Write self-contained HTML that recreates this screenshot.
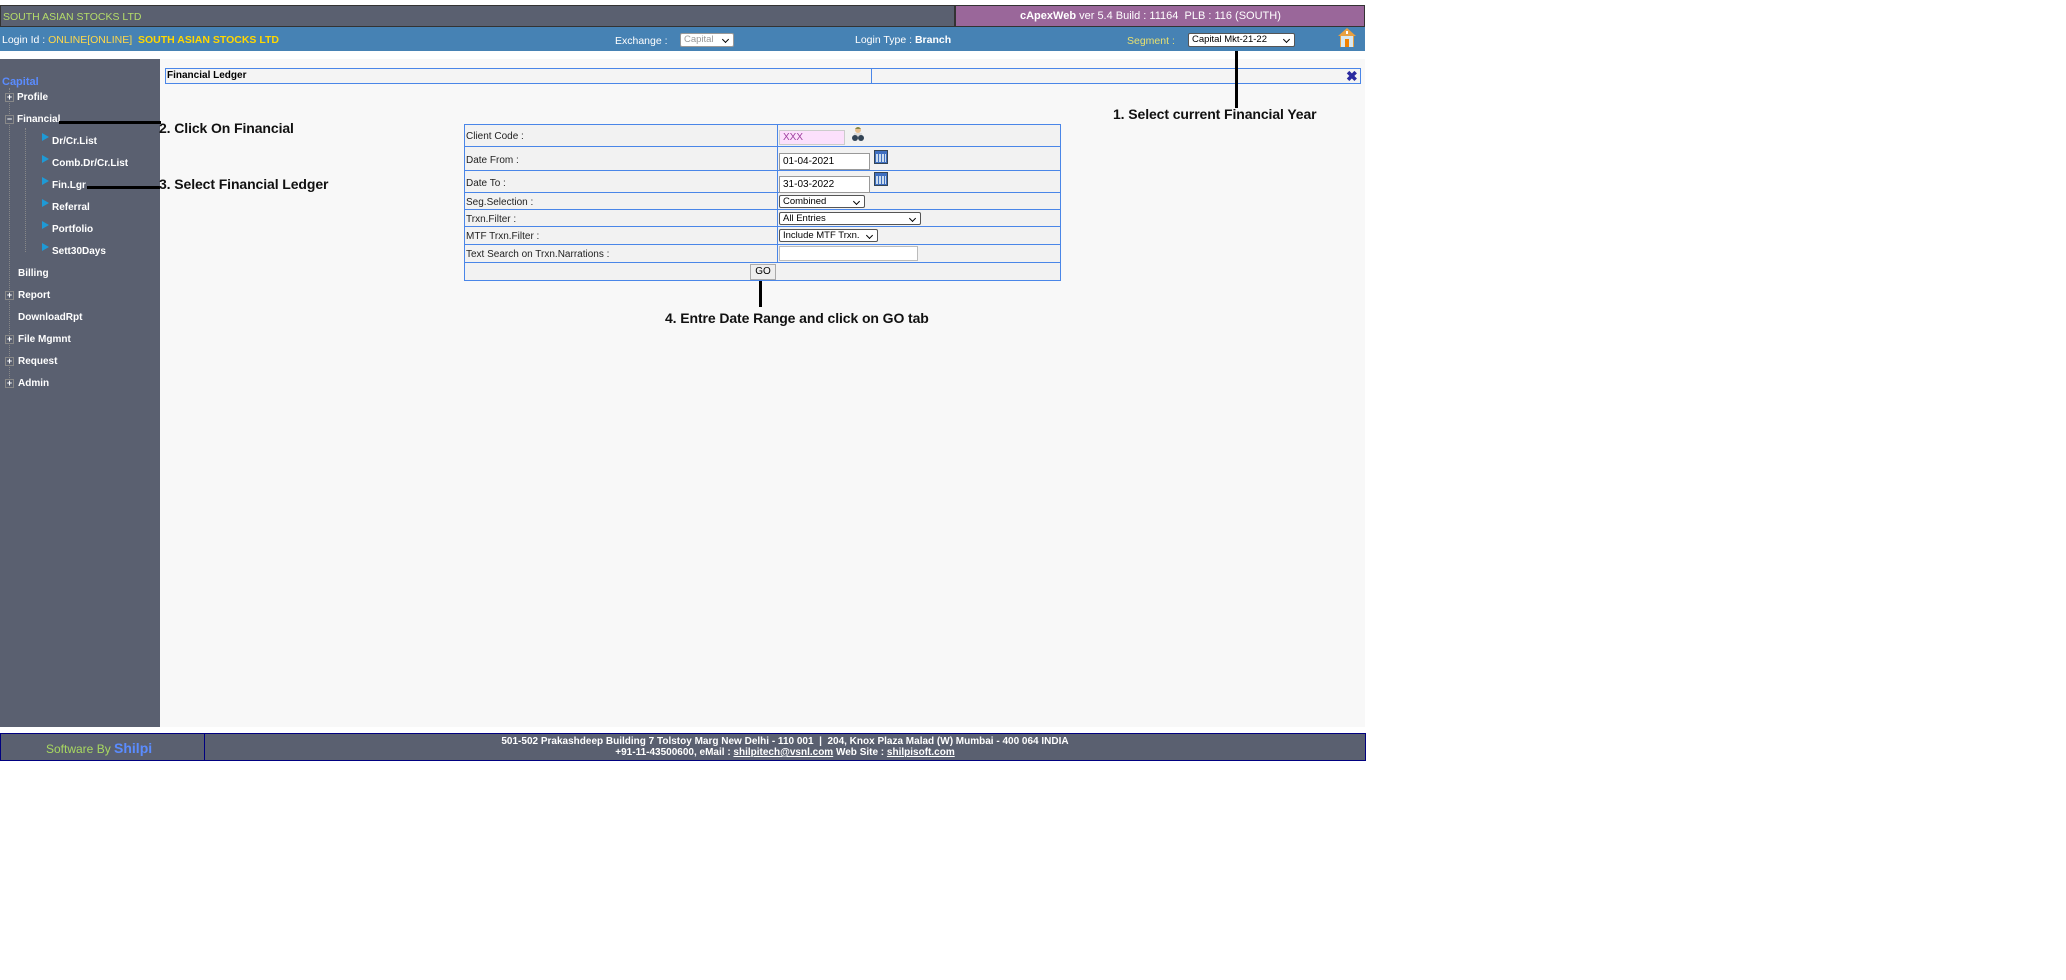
<!DOCTYPE html>
<html><head><meta charset="utf-8">
<style>
*{margin:0;padding:0;box-sizing:border-box}
body{width:2066px;height:980px;background:#fff;position:relative;font-family:"Liberation Sans",sans-serif;overflow:hidden}
.a{position:absolute;white-space:nowrap}
.sb{font-size:10px;font-weight:bold;color:#fff}
.pl{position:absolute;width:9px;height:9px;border:1px solid #888;background:#5a6070;color:#fff;font-size:9px;line-height:7px;text-align:center;font-weight:bold}
.tri{position:absolute;width:0;height:0;border-left:7px solid #1e9ad6;border-top:4px solid transparent;border-bottom:4px solid transparent}
.ann{font-weight:bold;font-size:14px;color:#111;letter-spacing:-0.1px}
.lbl{font-size:10px;color:#222}
.inp{position:absolute;border:1px solid #999;background:#fff;font-size:10px;padding-left:3px;color:#000}
.sel{position:absolute;border:1px solid #555;background:#fff;font-size:9.5px;padding-left:3px;color:#000;border-radius:2px}
.sel:after{content:"";position:absolute;right:5px;top:3px;width:4px;height:4px;border-right:1.6px solid #000;border-bottom:1.6px solid #000;transform:rotate(45deg)}
.cal{position:absolute;width:14px;height:14px;background:#3f6fc0;border:1px solid #345}
.cal:before{content:"";position:absolute;left:1px;top:3px;width:10px;height:8px;background:repeating-linear-gradient(90deg,#cde 0 2px,#3f6fc0 2px 3px)}
</style></head><body>
<div class="a" style="left:0;top:5px;width:955px;height:22px;background:#5a6070;border:1px solid #333"></div>
<div class="a" style="left:3px;top:11px;font-size:10.5px;color:#b5dc6a">SOUTH ASIAN STOCKS LTD</div>
<div class="a" style="left:955px;top:5px;width:410px;height:22px;background:#9a679a;border:1px solid #333"></div>
<div class="a" style="left:1020px;top:10px;font-size:11px;color:#fff"><b>cApexWeb</b> ver 5.4 Build : 11164&nbsp; PLB : 116 (SOUTH)</div>
<div class="a" style="left:0;top:27px;width:1365px;height:24px;background:#4682b4"></div>
<div class="a" style="left:2px;top:34px;font-size:10.5px;color:#fff">Login Id : <span style="color:#ffd84a">ONLINE[ONLINE]</span>&nbsp; <b style="color:#ffd700">SOUTH ASIAN STOCKS LTD</b></div>
<div class="a" style="left:615px;top:35px;font-size:10.5px;color:#fff">Exchange :</div>
<div class="sel" style="left:680px;top:33px;width:54px;height:14px;color:#999;border-color:#999">Capital</div>
<div class="a" style="left:855px;top:34px;font-size:10.5px;color:#fff">Login Type : <b>Branch</b></div>
<div class="a" style="left:1127px;top:35px;font-size:10.5px;color:#e8e070">Segment :</div>
<div class="sel" style="left:1188px;top:33px;width:107px;height:14px">Capital Mkt-21-22</div>
<svg class="a" style="left:1337px;top:27px" width="20" height="21" viewBox="0 0 20 21"><path d="M10 1 L19 9 L17 9 L17 20 L3 20 L3 9 L1 9Z" fill="#e8a040"/><rect x="4" y="9" width="12" height="11" fill="#d8e8f0"/><rect x="8" y="12" width="4" height="8" fill="#f08000"/><rect x="9" y="4" width="2" height="3" fill="#fff"/></svg>
<div class="a" style="left:0;top:59px;width:160px;height:668px;background:#5a6070"></div>
<div class="a" style="left:9px;top:88px;width:0;height:300px;border-left:1px dotted #888"></div>
<div class="a" style="left:25px;top:128px;width:0;height:124px;border-left:1px dotted #888"></div>
<div class="a" style="left:2px;top:76px;font-size:11px;font-weight:bold;color:#5a8cff">Capital</div>
<div class="pl" style="left:5px;top:93px">+</div><div class="a sb" style="left:17px;top:92px">Profile</div>
<div class="pl" style="left:5px;top:115px">−</div><div class="a sb" style="left:17px;top:114px">Financial</div>
<div class="tri" style="left:42px;top:133px"></div><div class="a sb" style="left:52px;top:136px">Dr/Cr.List</div>
<div class="tri" style="left:42px;top:155px"></div><div class="a sb" style="left:52px;top:158px">Comb.Dr/Cr.List</div>
<div class="tri" style="left:42px;top:177px"></div><div class="a sb" style="left:52px;top:180px">Fin.Lgr</div>
<div class="tri" style="left:42px;top:199px"></div><div class="a sb" style="left:52px;top:202px">Referral</div>
<div class="tri" style="left:42px;top:221px"></div><div class="a sb" style="left:52px;top:224px">Portfolio</div>
<div class="tri" style="left:42px;top:243px"></div><div class="a sb" style="left:52px;top:246px">Sett30Days</div>
<div class="a sb" style="left:18px;top:268px">Billing</div>
<div class="pl" style="left:5px;top:291px">+</div><div class="a sb" style="left:18px;top:290px">Report</div>
<div class="a sb" style="left:18px;top:312px">DownloadRpt</div>
<div class="pl" style="left:5px;top:335px">+</div><div class="a sb" style="left:18px;top:334px">File Mgmnt</div>
<div class="pl" style="left:5px;top:357px">+</div><div class="a sb" style="left:18px;top:356px">Request</div>
<div class="pl" style="left:5px;top:379px">+</div><div class="a sb" style="left:18px;top:378px">Admin</div>
<div class="a" style="left:160px;top:59px;width:1205px;height:668px;background:#f8f8f8"></div>
<div class="a" style="left:165px;top:68px;width:1196px;height:16px;border:1px solid #4a86e8;background:#f4f4f4"></div>
<div class="a" style="left:871px;top:68px;width:1px;height:16px;background:#4a86e8"></div>
<div class="a" style="left:167px;top:70px;font-size:10px;font-weight:bold;color:#000">Financial Ledger</div>
<div class="a" style="left:1346px;top:70px;font-size:14px;line-height:12px;color:#2a2aa0;font-weight:bold">✖</div>
<div class="a" style="left:464px;top:124px;width:597px;height:157px;border:1px solid #4a86e8;background:#f2f2f2"></div>
<div class="a" style="left:777px;top:124px;width:1px;height:139px;background:#4a86e8"></div>
<div class="a" style="left:464px;top:146px;width:597px;height:1px;background:#4a86e8"></div>
<div class="a" style="left:464px;top:170px;width:597px;height:1px;background:#4a86e8"></div>
<div class="a" style="left:464px;top:192px;width:597px;height:1px;background:#4a86e8"></div>
<div class="a" style="left:464px;top:209px;width:597px;height:1px;background:#4a86e8"></div>
<div class="a" style="left:464px;top:226px;width:597px;height:1px;background:#4a86e8"></div>
<div class="a" style="left:464px;top:244px;width:597px;height:1px;background:#4a86e8"></div>
<div class="a" style="left:464px;top:262px;width:597px;height:1px;background:#4a86e8"></div>
<div class="a lbl" style="left:466px;top:131px">Client Code :</div>
<div class="a lbl" style="left:466px;top:155px">Date From :</div>
<div class="a lbl" style="left:466px;top:178px">Date To :</div>
<div class="a lbl" style="left:466px;top:197px">Seg.Selection :</div>
<div class="a lbl" style="left:466px;top:214px">Trxn.Filter :</div>
<div class="a lbl" style="left:466px;top:231px">MTF Trxn.Filter :</div>
<div class="a lbl" style="left:466px;top:249px">Text Search on Trxn.Narrations :</div>
<div class="inp" style="left:779px;top:130px;width:66px;height:15px;background:#fce0fc;border-color:#ccc;color:#a040a0;line-height:13px">XXX</div>
<svg class="a" style="left:850px;top:126px" width="16" height="16" viewBox="0 0 16 16"><circle cx="8" cy="4" r="3" fill="#e8c090"/><path d="M5 3 Q8 -1 11 3Z" fill="#884"/><rect x="4" y="7" width="8" height="4" fill="#ddd"/><circle cx="5" cy="12" r="3" fill="#345"/><circle cx="11" cy="12" r="3" fill="#345"/></svg>
<div class="inp" style="left:779px;top:153px;width:91px;height:17px;line-height:15px">01-04-2021</div>
<div class="cal" style="left:874px;top:150px"></div>
<div class="inp" style="left:779px;top:176px;width:91px;height:17px;line-height:15px">31-03-2022</div>
<div class="cal" style="left:874px;top:172px"></div>
<div class="sel" style="left:779px;top:195px;width:86px;height:13px;line-height:11px">Combined</div>
<div class="sel" style="left:779px;top:212px;width:142px;height:13px;line-height:11px">All Entries</div>
<div class="sel" style="left:779px;top:229px;width:99px;height:13px;line-height:11px">Include MTF Trxn.</div>
<div class="inp" style="left:779px;top:246px;width:139px;height:15px;border-color:#bbb"></div>
<div class="a" style="left:750px;top:264px;width:26px;height:16px;border:1px solid #aaa;background:#eee;font-size:10px;text-align:center;line-height:14px">GO</div>
<div class="a" style="left:59px;top:121px;width:102px;height:3px;background:#000"></div>
<div class="a ann" style="left:159px;top:120px">2. Click On Financial</div>
<div class="a" style="left:87px;top:186px;width:73px;height:3px;background:#000"></div>
<div class="a ann" style="left:159px;top:176px">3. Select Financial Ledger</div>
<div class="a" style="left:1235px;top:51px;width:3px;height:57px;background:#000"></div>
<div class="a ann" style="left:1113px;top:106px">1. Select current Financial Year</div>
<div class="a" style="left:759px;top:281px;width:3px;height:26px;background:#000"></div>
<div class="a ann" style="left:665px;top:310px">4. Entre Date Range and click on GO tab</div>
<div class="a" style="left:0;top:733px;width:1366px;height:28px;background:#5a6070;border:1px solid #000080"></div>
<div class="a" style="left:204px;top:733px;width:1px;height:28px;background:#000080"></div>
<div class="a" style="left:46px;top:740px;font-size:12px;color:#a8d860">Software By <b style="color:#5a8cff;font-size:14px">Shilpi</b></div>
<div class="a" style="left:205px;top:736px;width:1160px;text-align:center;font-size:10px;font-weight:bold;color:#fff;line-height:11px">501-502 Prakashdeep Building 7 Tolstoy Marg New Delhi - 110 001 &nbsp;|&nbsp;  204, Knox Plaza Malad (W) Mumbai - 400 064 INDIA<br>+91-11-43500600, eMail : <u>shilpitech@vsnl.com</u> Web Site : <u>shilpisoft.com</u></div>
</body></html>
